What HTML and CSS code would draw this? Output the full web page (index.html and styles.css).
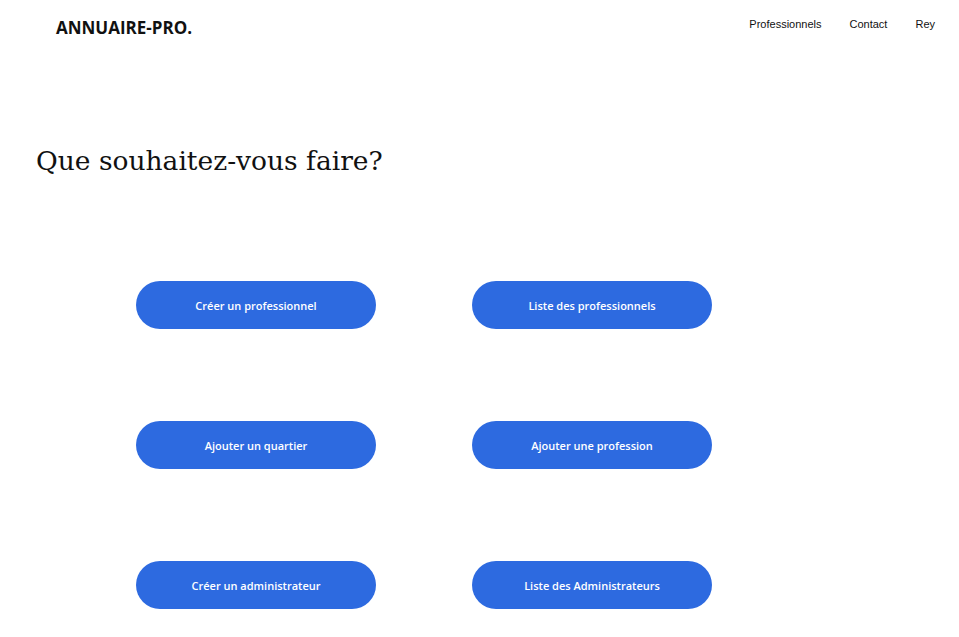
FILE: index.html
```html
<!DOCTYPE html>
<html lang="fr">
<head>
<meta charset="utf-8">
<title>Annuaire-Pro</title>
<link rel="stylesheet" href="styles.css">
</head>
<body>
<header class="topbar">
  <a class="brand" href="#">ANNUAIRE-PRO.</a>
  <nav class="nav">
    <a href="#">Professionnels</a>
    <a href="#">Contact</a>
    <a href="#">Rey</a>
  </nav>
</header>
<main class="main">
  <h1 class="title">Que souhaitez-vous faire?</h1>
  <div class="actions">
    <a class="btn" href="#">Créer un professionnel</a>
    <a class="btn" href="#">Liste des professionnels</a>
    <a class="btn" href="#">Ajouter un quartier</a>
    <a class="btn" href="#">Ajouter une profession</a>
    <a class="btn" href="#">Créer un administrateur</a>
    <a class="btn" href="#">Liste des Administrateurs</a>
  </div>
</main>
</body>
</html>
```
FILE: styles.css
```css
html, body {
  margin: 0;
  padding: 0;
  background: #ffffff;
}
body {
  font-family: "Open Sans", "Noto Sans", sans-serif;
  color: #111;
}
a { text-decoration: none; }
.topbar {
  display: flex;
  justify-content: space-between;
  align-items: center;
  height: 54px;
  padding: 0 24px 0 56px;
}
.brand {
  font-family: "Open Sans", sans-serif;
  font-weight: 700;
  font-size: 17px;
  color: #111;
}
.nav {
  display: flex;
  gap: 28px;
  margin-top: -6px;
}
.nav a {
  font-family: "Liberation Sans", Arial, sans-serif;
  font-size: 11px;
  color: #111;
}
.main {
  padding: 0 0 0 36px;
}
.title {
  margin: 89px 0 0 0;
  font-family: "DejaVu Serif", serif;
  font-weight: 400;
  font-size: 26.5px;
  color: #111;
  line-height: 36px;
}
.actions {
  display: grid;
  grid-template-columns: 240px 240px;
  column-gap: 96px;
  row-gap: 92px;
  margin: 102px 0 0 100px;
}
.btn {
  display: flex;
  align-items: center;
  justify-content: center;
  height: 48px;
  border-radius: 24px;
  background: #2d6ae0;
  color: #ffffff;
  font-family: "Open Sans", sans-serif;
  font-weight: 600;
  font-size: 11px;
}
```
